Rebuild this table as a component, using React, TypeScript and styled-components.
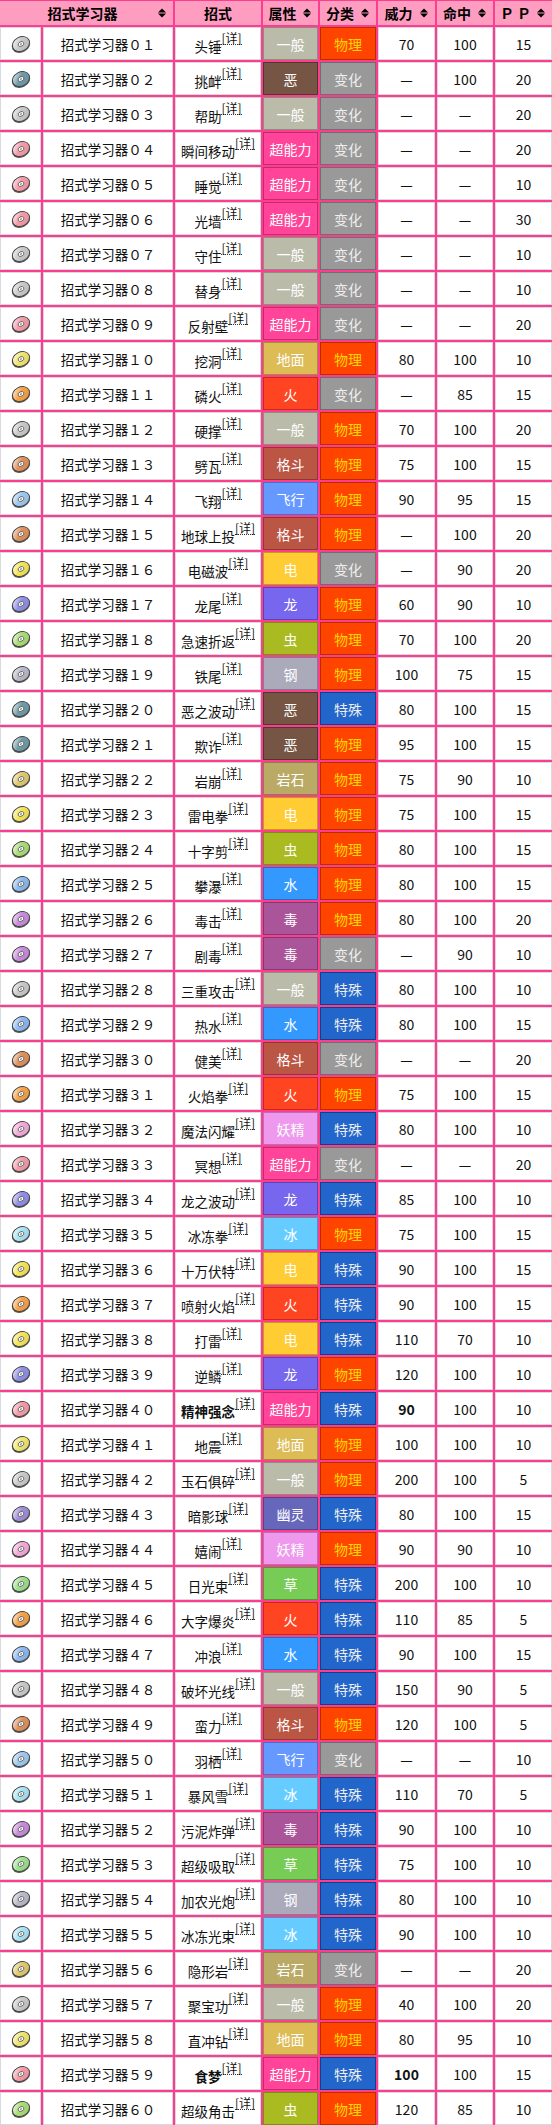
import React from 'react';
import styled, { createGlobalStyle } from 'styled-components';

const GlobalStyle = createGlobalStyle`
  html, body {
    margin: 0;
    padding: 0;
    background: #ffffff;
  }
  body {
    font-family: 'Noto Sans CJK SC', 'Noto Sans', sans-serif;
  }
`;

const PINK = '#FF3D8E';

type TypeName =
  | '一般' | '恶' | '超能力' | '地面' | '火' | '格斗' | '飞行' | '电' | '龙'
  | '虫' | '钢' | '岩石' | '水' | '毒' | '妖精' | '冰' | '幽灵' | '草';

type Category = '物理' | '特殊' | '变化';

const typeColors: Record<TypeName, { bg: string; border: string; disc: string }> = {
  一般: { bg: '#BBBBAA', border: '#8E8E7E', disc: '#C8C8C8' },
  恶: { bg: '#775544', border: '#4E372C', disc: '#6E9AA8' },
  超能力: { bg: '#FF4499', border: '#C42A70', disc: '#F49AA6' },
  地面: { bg: '#DDBB55', border: '#A88C3A', disc: '#F0E66A' },
  火: { bg: '#FF4422', border: '#C22E12', disc: '#F7A044' },
  格斗: { bg: '#BB5544', border: '#8A3B2E', disc: '#E0905A' },
  飞行: { bg: '#6699FF', border: '#4870C4', disc: '#9CC8EE' },
  电: { bg: '#FFCC33', border: '#C49A1E', disc: '#F4E454' },
  龙: { bg: '#7766EE', border: '#5346B8', disc: '#8E8EE8' },
  虫: { bg: '#AABB22', border: '#7F8C14', disc: '#A8DC74' },
  钢: { bg: '#AAAABB', border: '#80808E', disc: '#B8B8C8' },
  岩石: { bg: '#BBAA66', border: '#8C7E48', disc: '#E0C86A' },
  水: { bg: '#3399FF', border: '#2270C2', disc: '#8AB8F0' },
  毒: { bg: '#AA5599', border: '#7E3A70', disc: '#C88ADC' },
  妖精: { bg: '#EE99EE', border: '#B870B8', disc: '#F4A8D8' },
  冰: { bg: '#66CCFF', border: '#4698C4', disc: '#A8E4F4' },
  幽灵: { bg: '#6666BB', border: '#48488C', disc: '#A08CD8' },
  草: { bg: '#77CC55', border: '#52983A', disc: '#9CE08A' },
};

const categoryColors: Record<Category, { bg: string; border: string; fg: string }> = {
  物理: { bg: '#FF4400', border: '#B82E00', fg: '#FFD700' },
  特殊: { bg: '#2266CC', border: '#123E8A', fg: '#EEEEEE' },
  变化: { bg: '#999999', border: '#6E6E6E', fg: '#EEEEEE' },
};

type Row = [string, TypeName, Category, string, string, string, boolean?];

const rows: Row[] = [
  ['头锤', '一般', '物理', '70', '100', '15'],
  ['挑衅', '恶', '变化', '—', '100', '20'],
  ['帮助', '一般', '变化', '—', '—', '20'],
  ['瞬间移动', '超能力', '变化', '—', '—', '20'],
  ['睡觉', '超能力', '变化', '—', '—', '10'],
  ['光墙', '超能力', '变化', '—', '—', '30'],
  ['守住', '一般', '变化', '—', '—', '10'],
  ['替身', '一般', '变化', '—', '—', '10'],
  ['反射壁', '超能力', '变化', '—', '—', '20'],
  ['挖洞', '地面', '物理', '80', '100', '10'],
  ['磷火', '火', '变化', '—', '85', '15'],
  ['硬撑', '一般', '物理', '70', '100', '20'],
  ['劈瓦', '格斗', '物理', '75', '100', '15'],
  ['飞翔', '飞行', '物理', '90', '95', '15'],
  ['地球上投', '格斗', '物理', '—', '100', '20'],
  ['电磁波', '电', '变化', '—', '90', '20'],
  ['龙尾', '龙', '物理', '60', '90', '10'],
  ['急速折返', '虫', '物理', '70', '100', '20'],
  ['铁尾', '钢', '物理', '100', '75', '15'],
  ['恶之波动', '恶', '特殊', '80', '100', '15'],
  ['欺诈', '恶', '物理', '95', '100', '15'],
  ['岩崩', '岩石', '物理', '75', '90', '10'],
  ['雷电拳', '电', '物理', '75', '100', '15'],
  ['十字剪', '虫', '物理', '80', '100', '15'],
  ['攀瀑', '水', '物理', '80', '100', '15'],
  ['毒击', '毒', '物理', '80', '100', '20'],
  ['剧毒', '毒', '变化', '—', '90', '10'],
  ['三重攻击', '一般', '特殊', '80', '100', '10'],
  ['热水', '水', '特殊', '80', '100', '15'],
  ['健美', '格斗', '变化', '—', '—', '20'],
  ['火焰拳', '火', '物理', '75', '100', '15'],
  ['魔法闪耀', '妖精', '特殊', '80', '100', '10'],
  ['冥想', '超能力', '变化', '—', '—', '20'],
  ['龙之波动', '龙', '特殊', '85', '100', '10'],
  ['冰冻拳', '冰', '物理', '75', '100', '15'],
  ['十万伏特', '电', '特殊', '90', '100', '15'],
  ['喷射火焰', '火', '特殊', '90', '100', '15'],
  ['打雷', '电', '特殊', '110', '70', '10'],
  ['逆鳞', '龙', '物理', '120', '100', '10'],
  ['精神强念', '超能力', '特殊', '90', '100', '10', true],
  ['地震', '地面', '物理', '100', '100', '10'],
  ['玉石俱碎', '一般', '物理', '200', '100', '5'],
  ['暗影球', '幽灵', '特殊', '80', '100', '15'],
  ['嬉闹', '妖精', '物理', '90', '90', '10'],
  ['日光束', '草', '特殊', '200', '100', '10'],
  ['大字爆炎', '火', '特殊', '110', '85', '5'],
  ['冲浪', '水', '特殊', '90', '100', '15'],
  ['破坏光线', '一般', '特殊', '150', '90', '5'],
  ['蛮力', '格斗', '物理', '120', '100', '5'],
  ['羽栖', '飞行', '变化', '—', '—', '10'],
  ['暴风雪', '冰', '特殊', '110', '70', '5'],
  ['污泥炸弹', '毒', '特殊', '90', '100', '10'],
  ['超级吸取', '草', '特殊', '75', '100', '10'],
  ['加农光炮', '钢', '特殊', '80', '100', '10'],
  ['冰冻光束', '冰', '特殊', '90', '100', '10'],
  ['隐形岩', '岩石', '变化', '—', '—', '20'],
  ['聚宝功', '一般', '物理', '40', '100', '20'],
  ['直冲钻', '地面', '物理', '80', '95', '10'],
  ['食梦', '超能力', '特殊', '100', '100', '15', true],
  ['超级角击', '虫', '物理', '120', '85', '10'],
];

const fullWidth = (n: number) =>
  String(n).padStart(2, '0').split('').map(d => String.fromCharCode(0xff10 + Number(d))).join('');

const Table = styled.div`
  display: grid;
  grid-template-columns: 41px 130px 86px 55px 56px 57px 56px 57px;
  grid-template-rows: 24px;
  grid-auto-rows: 33px;
  gap: 2px;
  padding-top: 1px;
  width: 552px;
  background: ${PINK};
`;

const HeadCell = styled.div<{ $span?: number }>`
  grid-column: span ${p => p.$span ?? 1};
  display: flex;
  align-items: center;
  justify-content: center;
  position: relative;
  background: #FF9DC0;
  color: #000;
  font-weight: bold;
  font-size: 14px;
`;

const SortMark = styled.span`
  position: absolute;
  right: 7px;
  top: 50%;
  transform: translateY(-50%);
  display: flex;
  flex-direction: column;
  gap: 1px;
`;

const Tri = styled.span<{ $down?: boolean }>`
  width: 0;
  height: 0;
  border-left: 4px solid transparent;
  border-right: 4px solid transparent;
  ${p => (p.$down ? 'border-top: 4px solid #000;' : 'border-bottom: 4px solid #000;')}
`;

const HeadLabel = styled.span<{ $shift?: number }>`
  margin-left: ${p => p.$shift ?? 0}px;
`;

const Cell = styled.div<{ $bold?: boolean }>`
  background: #fff;
  border: 1px solid #D8D8E0;
  box-sizing: border-box;
  display: flex;
  align-items: center;
  justify-content: center;
  font-size: 14px;
  color: #111;
  font-weight: ${p => (p.$bold ? 'bold' : 'normal')};
  white-space: nowrap;
`;

const NameCell = styled(Cell)`
  font-size: 13.5px;
`;

const ColorCell = styled(Cell)<{ $bg: string; $border: string; $fg: string }>`
  background: ${p => p.$bg};
  border: 1px solid ${p => p.$border};
  color: ${p => p.$fg};
`;

const MoveName = styled.span`
  position: relative;
  top: 2px;
  font-size: 13.5px;
`;

const Detail = styled.span`
  font-size: 12px;
  align-self: flex-start;
  margin-top: 3px;
  border-bottom: 1px dotted #333;
  line-height: 13px;
  font-weight: normal;
`;

const Disc = ({ color }: { color: string }) => (
  <svg width="22" height="20" viewBox="0 0 22 20">
    <defs>
      <linearGradient id={`g${color.slice(1)}`} x1="0" y1="0" x2="1" y2="1">
        <stop offset="0" stopColor="#ffffff" />
        <stop offset="0.45" stopColor={color} />
        <stop offset="1" stopColor={color} stopOpacity="0.85" />
      </linearGradient>
    </defs>
    <ellipse cx="11" cy="11" rx="9.5" ry="7.5" transform="rotate(-28 11 11)" fill="#555" />
    <ellipse
      cx="11"
      cy="10"
      rx="9"
      ry="7"
      transform="rotate(-28 11 10)"
      fill={`url(#g${color.slice(1)})`}
      stroke="#444"
      strokeWidth="0.9"
    />
    <ellipse cx="11" cy="10" rx="3" ry="2.2" transform="rotate(-28 11 10)" fill="#fff" stroke="#555" strokeWidth="0.8" />
    <ellipse cx="11" cy="10" rx="1" ry="0.7" transform="rotate(-28 11 10)" fill="#555" />
  </svg>
);

const sortable = ['属性', '分类', '威力', '命中', 'Ｐ Ｐ'];

const Header = () => (
  <>
    <HeadCell $span={2}>
      <HeadLabel $shift={-8}>招式学习器</HeadLabel>
      <SortMark><Tri /><Tri $down /></SortMark>
    </HeadCell>
    <HeadCell>招式</HeadCell>
    {sortable.map(label => (
      <HeadCell key={label}>
        <HeadLabel $shift={-16}>{label}</HeadLabel>
        <SortMark><Tri /><Tri $down /></SortMark>
      </HeadCell>
    ))}
  </>
);

export default function App() {
  return (
    <>
      <GlobalStyle />
      <Table>
        <Header />
        {rows.map(([move, type, cat, power, acc, pp, bold], i) => {
          const t = typeColors[type];
          const c = categoryColors[cat];
          return (
            <React.Fragment key={i}>
              <Cell><Disc color={t.disc} /></Cell>
              <NameCell>招式学习器{fullWidth(i + 1)}</NameCell>
              <Cell $bold={bold}>
                <MoveName>{move}</MoveName>
                <Detail>[详]</Detail>
              </Cell>
              <ColorCell $bg={t.bg} $border={t.border} $fg="#FFFFFF">{type}</ColorCell>
              <ColorCell $bg={c.bg} $border={c.border} $fg={c.fg}>{cat}</ColorCell>
              <Cell $bold={bold}>{power}</Cell>
              <Cell>{acc}</Cell>
              <Cell>{pp}</Cell>
            </React.Fragment>
          );
        })}
      </Table>
    </>
  );
}
